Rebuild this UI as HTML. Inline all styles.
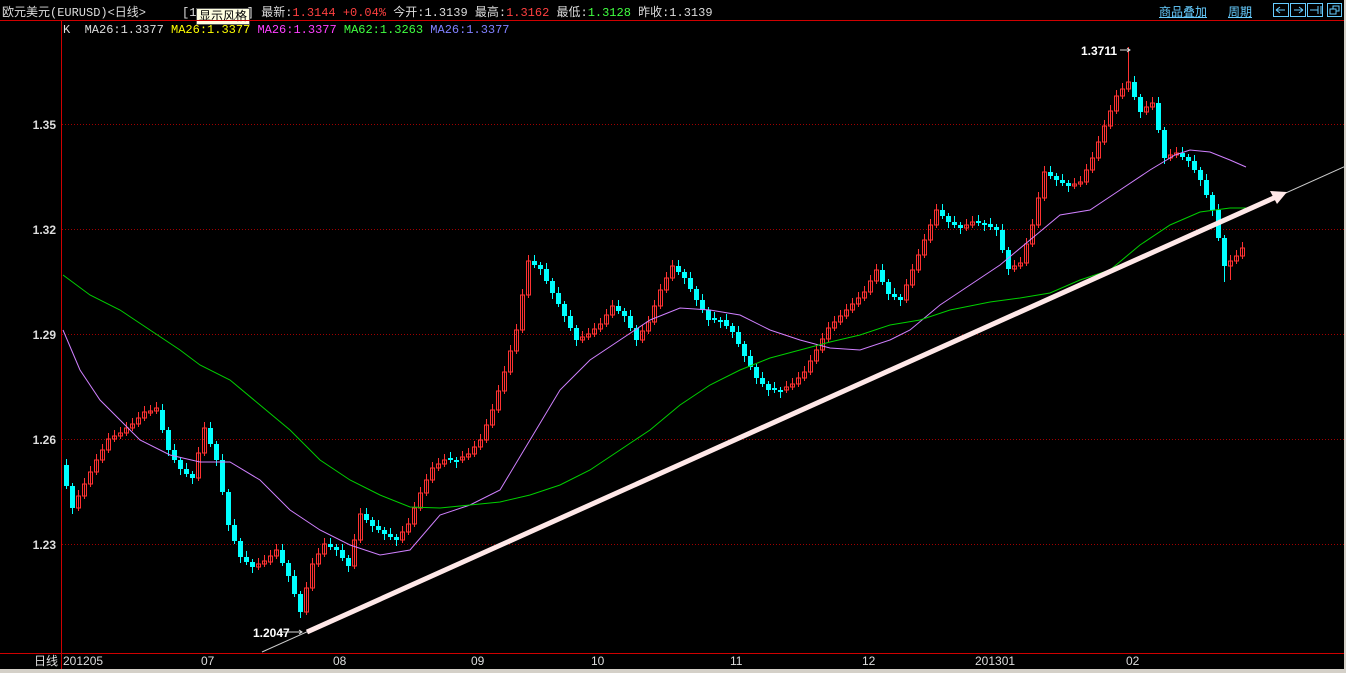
<!DOCTYPE html>
<html><head><meta charset="utf-8"><style>
body{margin:0;background:#000;width:1346px;height:673px;overflow:hidden;position:relative;font-family:"Liberation Sans","Noto Sans CJK SC",sans-serif;font-size:12px;color:#c8c8c8}
.t{position:absolute;white-space:nowrap}
</style></head><body>
<div class="t" style="left:2px;top:3px;font-family:'Liberation Mono','Noto Sans CJK SC',monospace;font-size:12px;color:#ddd">欧元美元(EURUSD)&lt;日线&gt;</div>
<div class="t" style="left:182px;top:3px;font-family:'Liberation Mono','Noto Sans CJK SC',monospace;font-size:12px;color:#ddd">[11:31:29] 最新:<span style="color:#ff4040">1.3144 +0.04%</span> 今开:1.3139 最高:<span style="color:#ff4040">1.3162</span> 最低:<span style="color:#40ff40">1.3128</span> 昨收:1.3139</div>
<div class="t" style="left:196px;top:8px;background:#ffffe1;color:#000;border:1px solid #555;padding:0 2px;font-size:12px;line-height:15px">显示风格</div>
<div class="t" style="left:63px;top:23px;font-family:'Liberation Mono',monospace;font-size:12px"><span style="color:#ddd">K&nbsp; MA26:1.3377</span> <span style="color:#ffff00">MA26:1.3377</span> <span style="color:#ff40ff">MA26:1.3377</span> <span style="color:#40ff40">MA62:1.3263</span> <span style="color:#8080ff">MA26:1.3377</span></div>
<div class="t" style="left:1159px;top:3px;color:#6cf;text-decoration:underline">商品叠加</div>
<div class="t" style="left:1228px;top:3px;color:#6cf;text-decoration:underline">周期</div>
<svg width="1346" height="673" style="position:absolute;left:0;top:0">
<g fill="none" stroke="#6cf" stroke-width="1">
<rect x="1273.5" y="3.5" width="15" height="13"/><rect x="1290.5" y="3.5" width="15" height="13"/><rect x="1307.5" y="3.5" width="15" height="13"/><rect x="1327.5" y="3.5" width="14" height="13"/>
<path d="M1276 10h9M1276 10l4-3M1276 10l4 3M1303 10h-9M1303 10l-4-3M1303 10l-4 3M1310 10h8M1318 6v8M1321 6v8M1330 9h6v5h-6zM1333 9v-3h6v5h-3"/>
</g>
<line x1="0" y1="20.5" x2="1346" y2="20.5" stroke="#d00000"/>
<line x1="61.5" y1="20" x2="61.5" y2="669" stroke="#d00000"/>
<line x1="0" y1="653.5" x2="1344" y2="653.5" stroke="#d00000"/>
<rect x="1344" y="0" width="2" height="673" fill="#d4d0c8"/>
<rect x="0" y="669" width="1346" height="4" fill="#d4d0c8"/>
<g stroke="#a00000" stroke-dasharray="1 2"><line x1="62" y1="124.5" x2="1344" y2="124.5"/><line x1="62" y1="229.5" x2="1344" y2="229.5"/><line x1="62" y1="334.5" x2="1344" y2="334.5"/><line x1="62" y1="439.5" x2="1344" y2="439.5"/><line x1="62" y1="544.5" x2="1344" y2="544.5"/></g>
<g fill="#ddd" font-size="12" font-weight="bold" text-anchor="end" font-family="Liberation Sans"><text x="56" y="129">1.35</text><text x="56" y="234">1.32</text><text x="56" y="339">1.29</text><text x="56" y="444">1.26</text><text x="56" y="549">1.23</text></g>
<g fill="#ddd" font-size="12" font-family="Liberation Sans,Noto Sans CJK SC"><text x="34" y="665">日线</text><text x="63" y="665">201205</text><text x="201" y="665">07</text><text x="333" y="665">08</text><text x="471" y="665">09</text><text x="591" y="665">10</text><text x="730" y="665">11</text><text x="862" y="665">12</text><text x="975" y="665">201301</text><text x="1126" y="665">02</text></g>

<path fill="#00ffff" d="M64,465h5V486h-5zM70,486h5V508h-5zM160,410h5V430h-5zM166,430h5V450h-5zM172,450h5V460h-5zM178,460h5V469h-5zM184,469h5V474h-5zM190,474h5V478h-5zM208,428h5V444h-5zM214,444h5V460h-5zM220,460h5V492h-5zM226,492h5V525h-5zM232,525h5V541h-5zM238,541h5V557h-5zM244,557h5V562h-5zM250,562h5V567h-5zM280,550h5V563h-5zM286,563h5V576h-5zM292,576h5V594h-5zM298,594h5V612h-5zM328,544h5V547h-5zM334,547h5V550h-5zM340,550h5V558h-5zM346,558h5V566h-5zM364,514h5V520h-5zM370,520h5V526h-5zM376,526h5V530h-5zM382,530h5V534h-5zM388,534h5V537h-5zM394,537h5V540h-5zM448,458h5V460h-5zM454,460h5V462h-5zM532,261h5V265h-5zM538,265h5V269h-5zM544,269h5V281h-5zM550,281h5V293h-5zM556,293h5V304h-5zM562,304h5V316h-5zM568,316h5V328h-5zM574,328h5V340h-5zM616,306h5V311h-5zM622,311h5V316h-5zM628,316h5V328h-5zM634,328h5V340h-5zM676,266h5V272h-5zM682,272h5V278h-5zM688,278h5V289h-5zM694,289h5V300h-5zM700,300h5V310h-5zM706,310h5V320h-5zM712,318h5V320h-5zM718,320h5V322h-5zM724,320h5V326h-5zM730,326h5V332h-5zM736,332h5V344h-5zM742,344h5V356h-5zM748,356h5V367h-5zM754,367h5V378h-5zM760,378h5V384h-5zM766,384h5V390h-5zM772,388h5V390h-5zM778,390h5V392h-5zM880,270h5V282h-5zM886,282h5V294h-5zM892,294h5V297h-5zM898,297h5V300h-5zM940,210h5V216h-5zM946,216h5V222h-5zM952,222h5V225h-5zM958,225h5V228h-5zM976,221h5V223h-5zM982,223h5V225h-5zM988,224h5V227h-5zM994,227h5V230h-5zM1000,230h5V250h-5zM1006,250h5V269h-5zM1048,172h5V176h-5zM1054,176h5V180h-5zM1060,180h5V183h-5zM1066,183h5V186h-5zM1132,82h5V97h-5zM1138,97h5V112h-5zM1156,103h5V130h-5zM1162,130h5V158h-5zM1180,153h5V157h-5zM1186,157h5V161h-5zM1192,161h5V170h-5zM1198,170h5V180h-5zM1204,180h5V195h-5zM1210,195h5V210h-5zM1216,210h5V238h-5zM1222,238h5V266h-5z"/>
<path stroke="#00ffff" fill="none" d="M66.5,459V489M72.5,483V514M162.5,404V433M168.5,427V456M174.5,444V463M180.5,457V475M186.5,463V477M192.5,471V484M210.5,422V447M216.5,441V466M222.5,454V495M228.5,489V531M234.5,519V544M240.5,538V563M246.5,551V565M252.5,559V573M282.5,544V566M288.5,560V582M294.5,570V597M300.5,591V618M330.5,538V550M336.5,544V556M342.5,544V561M348.5,555V572M366.5,508V523M372.5,517V532M378.5,520V533M384.5,527V540M390.5,528V540M396.5,534V546M450.5,452V463M456.5,457V468M534.5,255V268M540.5,262V275M546.5,263V284M552.5,278V299M558.5,287V307M564.5,301V322M570.5,310V331M576.5,325V346M618.5,300V314M624.5,308V322M630.5,310V331M636.5,325V346M678.5,260V275M684.5,269V284M690.5,272V292M696.5,286V306M702.5,294V313M708.5,307V326M714.5,312V323M720.5,317V328M726.5,314V329M732.5,323V338M738.5,326V347M744.5,341V362M750.5,350V370M756.5,364V384M762.5,372V387M768.5,381V396M774.5,382V393M780.5,387V398M882.5,264V285M888.5,279V300M894.5,288V300M900.5,294V306M942.5,204V219M948.5,213V228M954.5,216V228M960.5,222V234M978.5,215V226M984.5,220V231M990.5,218V230M996.5,224V236M1002.5,224V253M1008.5,247V275M1050.5,166V179M1056.5,173V186M1062.5,174V186M1068.5,180V192M1134.5,76V100M1140.5,94V118M1158.5,97V133M1164.5,127V164M1182.5,147V160M1188.5,154V167M1194.5,155V173M1200.5,167V186M1206.5,174V198M1212.5,192V216M1218.5,204V241M1224.5,235V282"/>
<path stroke="#ff3232" fill="none" d="M76.5,496h4V508h-4zM82.5,484h4V496h-4zM88.5,472h4V484h-4zM94.5,460h4V472h-4zM100.5,450h4V460h-4zM106.5,439h4V450h-4zM112.5,436h4V439h-4zM118.5,433h4V436h-4zM124.5,428h4V433h-4zM130.5,424h4V428h-4zM136.5,418h4V424h-4zM142.5,412h4V418h-4zM148.5,411h4V413h-4zM154.5,408h4V411h-4zM196.5,453h4V478h-4zM202.5,428h4V453h-4zM256.5,564h4V567h-4zM262.5,561h4V564h-4zM268.5,556h4V562h-4zM274.5,550h4V556h-4zM304.5,588h4V612h-4zM310.5,564h4V588h-4zM316.5,554h4V564h-4zM322.5,544h4V554h-4zM352.5,540h4V566h-4zM358.5,514h4V540h-4zM400.5,532h4V540h-4zM406.5,524h4V532h-4zM412.5,508h4V524h-4zM418.5,493h4V508h-4zM424.5,480h4V493h-4zM430.5,468h4V480h-4zM436.5,464h4V468h-4zM442.5,460h4V464h-4zM460.5,457h4V460h-4zM466.5,454h4V457h-4zM472.5,447h4V454h-4zM478.5,440h4V447h-4zM484.5,425h4V440h-4zM490.5,410h4V425h-4zM496.5,391h4V410h-4zM502.5,372h4V391h-4zM508.5,351h4V372h-4zM514.5,330h4V351h-4zM520.5,295h4V330h-4zM526.5,261h4V295h-4zM580.5,337h4V340h-4zM586.5,334h4V337h-4zM592.5,329h4V334h-4zM598.5,324h4V329h-4zM604.5,315h4V324h-4zM610.5,306h4V315h-4zM640.5,331h4V340h-4zM646.5,322h4V331h-4zM652.5,306h4V322h-4zM658.5,290h4V306h-4zM664.5,278h4V290h-4zM670.5,266h4V278h-4zM784.5,387h4V390h-4zM790.5,384h4V387h-4zM796.5,378h4V384h-4zM802.5,372h4V378h-4zM808.5,361h4V372h-4zM814.5,350h4V361h-4zM820.5,339h4V350h-4zM826.5,328h4V339h-4zM832.5,322h4V328h-4zM838.5,316h4V322h-4zM844.5,310h4V316h-4zM850.5,304h4V310h-4zM856.5,298h4V304h-4zM862.5,292h4V298h-4zM868.5,281h4V292h-4zM874.5,270h4V281h-4zM904.5,285h4V300h-4zM910.5,270h4V285h-4zM916.5,255h4V270h-4zM922.5,240h4V255h-4zM928.5,225h4V240h-4zM934.5,210h4V225h-4zM964.5,225h4V228h-4zM970.5,222h4V225h-4zM1012.5,266h4V269h-4zM1018.5,263h4V266h-4zM1024.5,244h4V263h-4zM1030.5,225h4V244h-4zM1036.5,198h4V225h-4zM1042.5,172h4V198h-4zM1072.5,184h4V186h-4zM1078.5,182h4V184h-4zM1084.5,170h4V182h-4zM1090.5,158h4V170h-4zM1096.5,142h4V158h-4zM1102.5,126h4V142h-4zM1108.5,111h4V126h-4zM1114.5,96h4V111h-4zM1120.5,89h4V96h-4zM1126.5,82h4V89h-4zM1144.5,107h4V112h-4zM1150.5,103h4V107h-4zM1168.5,155h4V158h-4zM1174.5,153h4V155h-4zM1228.5,261h4V266h-4zM1234.5,256h4V261h-4zM1240.5,248h4V256h-4z"/>
<path stroke="#ff3232" fill="none" d="M78.5,490V511M84.5,478V499M90.5,466V487M96.5,454V475M102.5,444V463M108.5,433V453M114.5,430V442M120.5,427V439M126.5,422V436M132.5,418V431M138.5,412V427M144.5,406V421M150.5,405V416M156.5,402V414M198.5,447V481M204.5,422V456M258.5,558V570M264.5,555V567M270.5,550V565M276.5,544V559M306.5,582V615M312.5,558V591M318.5,548V567M324.5,538V557M354.5,534V569M360.5,508V543M402.5,526V543M408.5,518V535M414.5,502V527M420.5,487V511M426.5,474V496M432.5,462V483M438.5,458V471M444.5,454V467M462.5,451V463M468.5,448V460M474.5,441V457M480.5,434V450M486.5,419V443M492.5,404V428M498.5,385V413M504.5,366V394M510.5,345V375M516.5,324V354M522.5,289V333M528.5,255V298M582.5,331V343M588.5,328V340M594.5,323V337M600.5,318V332M606.5,309V327M612.5,300V318M642.5,325V343M648.5,316V334M654.5,300V325M660.5,284V309M666.5,272V293M672.5,260V281M786.5,381V393M792.5,378V390M798.5,372V387M804.5,366V381M810.5,355V375M816.5,344V364M822.5,333V353M828.5,322V342M834.5,316V331M840.5,310V325M846.5,304V319M852.5,298V313M858.5,292V307M864.5,286V301M870.5,275V295M876.5,264V284M906.5,279V303M912.5,264V288M918.5,249V273M924.5,234V258M930.5,219V243M936.5,204V228M966.5,219V231M972.5,216V228M1014.5,260V272M1020.5,257V269M1026.5,238V266M1032.5,219V247M1038.5,192V228M1044.5,166V201M1074.5,178V189M1080.5,176V187M1086.5,164V185M1092.5,152V173M1098.5,136V161M1104.5,120V145M1110.5,105V129M1116.5,90V114M1122.5,83V99M1128.5,47V92M1146.5,101V115M1152.5,97V110M1170.5,149V161M1176.5,147V158M1230.5,255V280M1236.5,250V264M1242.5,242V259"/>

<polyline fill="none" stroke="#d080ff" stroke-width="1" points="63,330 80,370 100,400 120,420 140,440 170,455 200,462 230,462 260,480 290,510 320,530 350,545 380,555 410,550 440,515 470,505 500,490 530,440 560,390 590,360 620,340 650,320 680,308 710,310 740,315 770,330 800,340 830,348 860,350 890,340 910,330 940,305 970,285 1000,265 1030,240 1060,215 1090,210 1120,190 1150,170 1175,155 1190,150 1210,152 1230,160 1246,167"/>
<polyline fill="none" stroke="#00d000" stroke-width="1" points="63,275 90,295 120,310 150,330 180,350 200,365 230,380 260,405 290,430 320,460 350,480 380,495 410,507 440,508 470,505 500,502 530,495 560,485 590,470 620,450 650,430 680,405 710,385 740,370 770,358 800,350 830,342 860,335 890,325 920,320 950,310 990,302 1020,298 1050,293 1080,280 1110,270 1140,245 1170,225 1200,212 1230,208 1246,208"/>
<line x1="262" y1="652" x2="1346" y2="166" stroke="#ccc" stroke-width="1"/>
<line x1="307" y1="632" x2="1276" y2="197" stroke="#ffe8e8" stroke-width="5"/>
<polygon points="1287,192 1270,191 1277,204" fill="#ffe8e8"/>
<g fill="#fff" font-size="12" font-weight="bold" font-family="Liberation Sans"><text x="1081" y="55">1.3711</text><text x="253" y="637">1.2047</text></g>
<path d="M1120 50h10M1127 48l3 2-3 2M280 632h22M299 630l3 2-3 2" stroke="#ddd" fill="none"/>
</svg>
</body></html>
